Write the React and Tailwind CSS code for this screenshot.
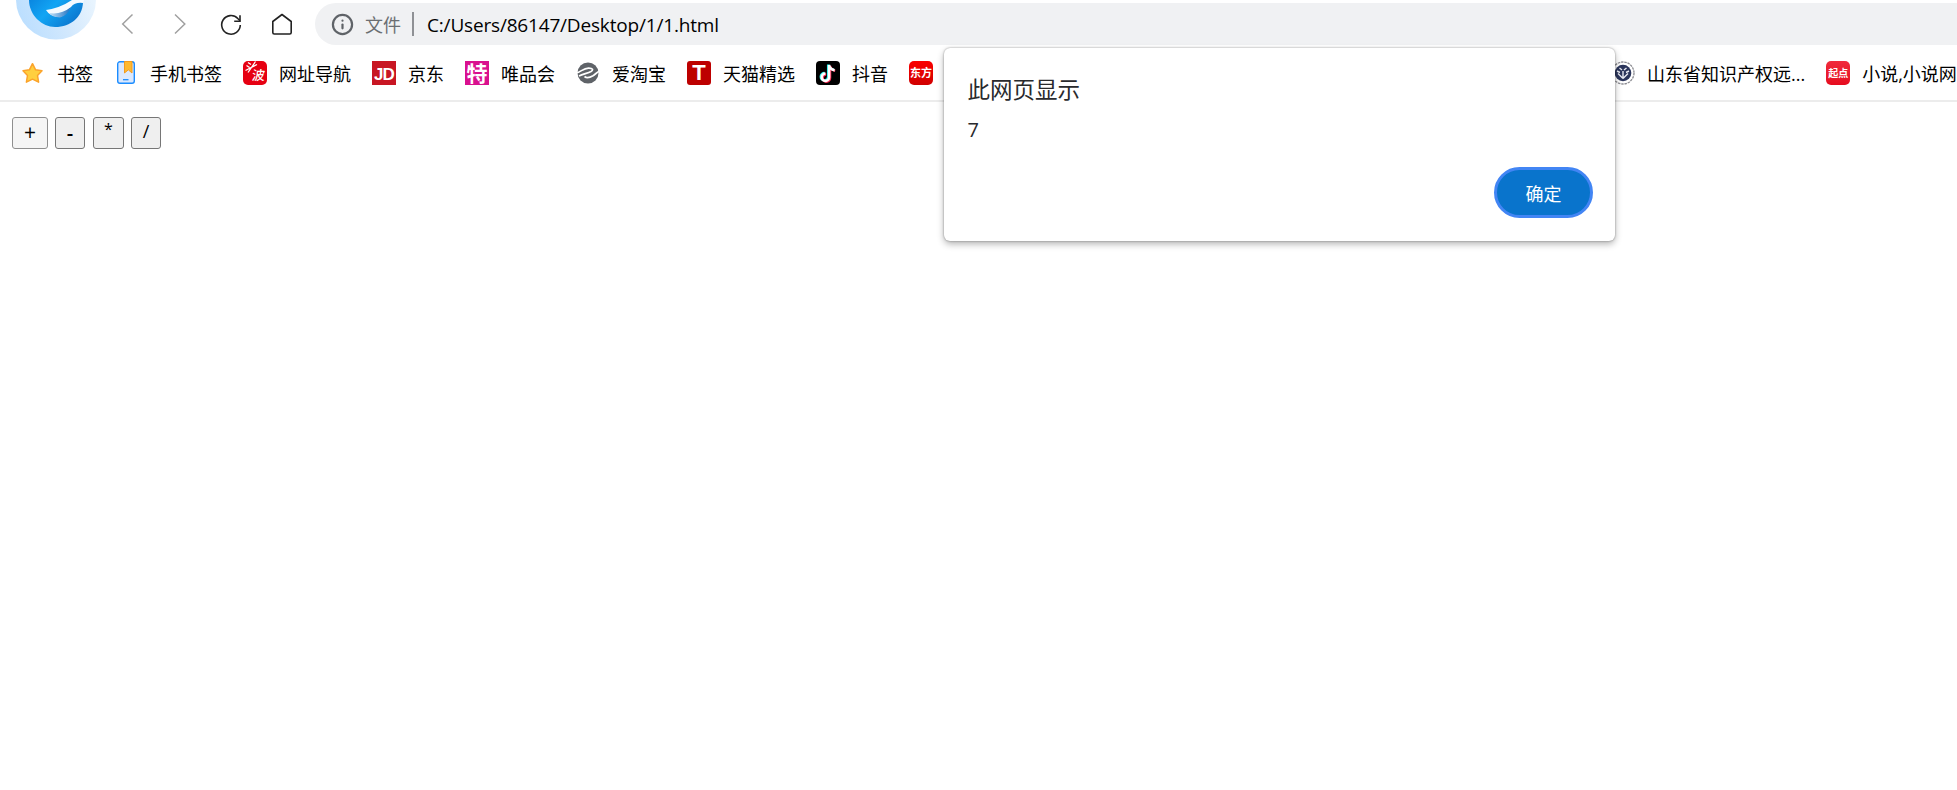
import { Info } from "lucide-react";

const operators = [
  { label: "+", className: "w-9 mr-[7px] border-[#8f8f8f] bg-[#f5f5f5] pb-0.5 text-[21px]" },
  { label: "-", className: "w-[30px] mr-2 border-[#767676] bg-[#efefef] text-xl font-semibold" },
  { label: "*", className: "w-[31px] mr-[7px] border-[#767676] bg-[#efefef] pb-2 text-base" },
  { label: "/", className: "w-[30px] border-[#767676] bg-[#efefef] pb-1 text-lg" },
];

function BrowserLogo() {
  return (
    <svg className="block" width="80" height="40" viewBox="0 0 80 40">
      <defs>
        <linearGradient id="halo" x1="0" y1="1" x2="1" y2="0.6">
          <stop offset="0" stopColor="#b5dcff" />
          <stop offset="0.6" stopColor="#d2e8fd" />
          <stop offset="1" stopColor="#e8f4fe" />
        </linearGradient>
        <linearGradient id="swoosh" x1="0" y1="0" x2="1" y2="0.5">
          <stop offset="0" stopColor="#0a86e0" />
          <stop offset="0.45" stopColor="#12a5f4" />
          <stop offset="1" stopColor="#0b78d0" />
        </linearGradient>
        <linearGradient id="inner" x1="0" y1="0" x2="1" y2="0">
          <stop offset="0" stopColor="#c5e2f7" />
          <stop offset="1" stopColor="#1c6fc0" />
        </linearGradient>
      </defs>
      <circle cx="40" cy="-0.5" r="40" fill="url(#halo)" />
      <path d="M13 0C13 15 26 27 39 27C55 27 66 17 67 3V0Z" fill="url(#swoosh)" />
      <path d="M30 10Q44 8 56 0H68L67 3Q59 2 55 7Q50 15 44 17Q34 17 30 10Z" fill="#f4faff" />
      <path d="M33 13Q45 15 55 7Q51 16 44 17.500Q36 17 33 13Z" fill="url(#inner)" />
    </svg>
  );
}

function Toolbar() {
  return (
    <div className="flex h-[47px] items-start pl-4">
      <div className="w-20">
        <BrowserLogo />
      </div>
      <div className="flex h-12 items-center pl-[19px]">
        <svg className="mr-7" width="24" height="24" viewBox="0 0 24 24" fill="none" stroke="#a0a0a0" strokeWidth="1.5">
          <path d="M17.500 2.500L7.700 12L17.500 21.500" />
        </svg>
        <svg className="mr-7" width="24" height="24" viewBox="0 0 24 24" fill="none" stroke="#a0a0a0" strokeWidth="1.5">
          <path d="M8 2.500L17.800 12L8 21.500" />
        </svg>
        <svg className="mr-[27px]" width="24" height="24" viewBox="0 0 24 24" fill="none" stroke="#222" strokeWidth="1.6">
          <path d="M21.300 13A9.300 9.300 0 1 1 18.800 6.500L21 8.700" />
          <path d="M21 3.300V9.200H15.200" />
        </svg>
        <svg className="mr-[21px]" width="24" height="24" viewBox="0 0 24 24" fill="none" stroke="#222" strokeWidth="1.6" strokeLinejoin="round">
          <path d="M2.800 9.500L12 2.500L21.200 9.500V20.500Q21.200 22 19.700 22H4.300Q2.800 22 2.800 20.500Z" />
        </svg>
      </div>
      <div className="mt-[3px] flex h-[42px] flex-1 items-center rounded-l-full bg-[#f0f1f3] pl-4">
        <Info className="text-[#5f6368]" size={23} strokeWidth={2.3} />
        <span className="mt-0.5 ml-[11px] text-lg text-[#6b6e72]">文件</span>
        <span className="ml-[11px] h-6 w-0.5 bg-[#8f9195]" />
        <span className="mt-0.5 ml-[13px] text-[19px] tracking-[-0.18px] text-black">C:/Users/86147/Desktop/1/1.html</span>
      </div>
    </div>
  );
}

function StarIcon() {
  return (
    <svg width="24" height="24" viewBox="0 0 24 24" fill="#ffcf3f" stroke="#fba32b" strokeWidth="1.5" strokeLinejoin="round">
      <path d="M11.500 2.700L14.600 8.800L21 9.800L16.500 14.500L17.600 21.200L11.500 18.200L5.400 21.200L6.500 14.500L2 9.800L8.400 8.800Z" />
    </svg>
  );
}

function PhoneIcon() {
  return (
    <svg width="24" height="24" viewBox="0 0 24 24">
      <rect x="3.700" y="0.700" width="16.600" height="21.600" rx="2.300" fill="#dbe8fd" stroke="#1a8cff" strokeWidth="1.400" />
      <path d="M10.500 0.500H18V12L14.300 8.800L10.500 12Z" fill="#ffb92e" stroke="#f39a1d" />
      <path d="M9 18.700H14.500" stroke="#1a8cff" strokeWidth="1.300" />
    </svg>
  );
}

function NavIcon() {
  return (
    <span className="flex size-6 items-end justify-end rounded-[5px] bg-[#e60012] pr-0.5 pb-0.5 text-white">
      <svg className="-mr-[7px] mb-2.5 shrink-0" width="14" height="12" viewBox="0 0 14 12" fill="none" stroke="#fff" strokeWidth="1.300">
        <path d="M3 1.500L6 3.500M1.500 4.500L4.500 6.500M0.500 9.500L12 3.500M10.500 0.500L3 11.500" />
      </svg>
      <span className="-skew-x-6 text-[13px] leading-[15px] font-medium">波</span>
    </span>
  );
}

function TaobaoIcon() {
  return (
    <svg width="24" height="24" viewBox="0 0 24 24">
      <circle cx="12" cy="12" r="10.500" fill="#5f6368" />
      <path d="M0 12C5 11 7 7.300 12.500 7.100C17 7 17.500 9 15 10.500C12 12.200 7 13 3 15" fill="none" stroke="#fff" strokeWidth="1.700" />
      <path d="M8.500 15.500C11 17.500 14 16.500 17 14.800C19.500 13.200 21 11 24 9.800" fill="none" stroke="#fff" strokeWidth="1.700" />
    </svg>
  );
}

function DouyinIcon() {
  return (
    <svg width="24" height="24" viewBox="0 0 24 24" fill="none" strokeWidth="2.500">
      <rect width="24" height="24" rx="4" fill="#000" />
      <path d="M12.200 3.500V15.700A3.700 3.700 0 1 1 8.500 12M12.200 3.500Q13 8 18 8.800" stroke="#25f4ee" />
      <path d="M14 5V17A3.700 3.700 0 1 1 10.200 13.300M14 5Q15 9 19.200 9.700" stroke="#fe2c55" />
      <path d="M13.100 4V16.300A3.700 3.700 0 1 1 9.400 12.600M13.100 4Q14 8.500 18.600 9.200" stroke="#fff" />
    </svg>
  );
}

function EmblemIcon() {
  return (
    <svg width="24" height="24" viewBox="0 0 24 24" fill="none">
      <circle cx="12" cy="12" r="11" stroke="#8c8c92" strokeWidth="1.300" strokeDasharray="2.500 0.800" />
      <circle cx="12" cy="12" r="8.300" fill="#2b355b" />
      <path d="M12 17.500L7 12.500M12 17.500V10M12 17.500L17 12.500M6 10L9 11.500M18 10L15 11.500M8.500 7L11 9M15.500 7L13 9" stroke="#e8eaf2" strokeWidth="1.400" />
    </svg>
  );
}

function TextIcon({ className, children }) {
  return (
    <span className={`flex size-6 items-center justify-center whitespace-nowrap text-white ${className}`}>
      {children}
    </span>
  );
}

function Bookmark({ icon, label }) {
  return (
    <div className="mr-[21px] flex h-6 shrink-0 items-center gap-3">
      {icon}
      {label && <span className="mt-0.5 text-lg leading-6 whitespace-nowrap">{label}</span>}
    </div>
  );
}

function BookmarksBar() {
  return (
    <div className="flex h-[55px] items-start overflow-hidden border-b-2 border-[#ececec] pt-3.5 pl-[21px]">
      <Bookmark icon={<StarIcon />} label="书签" />
      <Bookmark icon={<PhoneIcon />} label="手机书签" />
      <Bookmark icon={<NavIcon />} label="网址导航" />
      <Bookmark icon={<TextIcon className="bg-[#c81623] pt-0.5 font-['Liberation_Sans'] text-[17px] leading-none font-bold tracking-tighter">JD</TextIcon>} label="京东" />
      <Bookmark icon={<TextIcon className="bg-[#d9108f] text-[21px] leading-6 font-bold">特</TextIcon>} label="唯品会" />
      <Bookmark icon={<TaobaoIcon />} label="爱淘宝" />
      <Bookmark icon={<TextIcon className="rounded-[3px] bg-[#bd0000] font-['Liberation_Sans'] text-[22px] leading-6 font-bold">T</TextIcon>} label="天猫精选" />
      <Bookmark icon={<DouyinIcon />} label="抖音" />
      <Bookmark icon={<TextIcon className="rounded-[5px] bg-linear-to-b from-[#fb0000] to-[#d00000] text-[11px] font-bold">东方</TextIcon>} />
      <div className="w-[657px] shrink-0" />
      <Bookmark icon={<EmblemIcon />} label="山东省知识产权远..." />
      <Bookmark icon={<TextIcon className="rounded-[5px] bg-linear-to-b from-[#f02a3c] to-[#e60a1e] text-[10px] font-bold">起点</TextIcon>} label="小说,小说网" />
    </div>
  );
}

function AlertDialog() {
  return (
    <div className="absolute top-12 left-[943.5px] flex h-[193px] w-[671.5px] flex-col rounded-md bg-white px-6 text-[#292a2d] shadow-[0_0_2px_rgba(0,0,0,0.4),0_3px_7px_rgba(0,0,0,0.3)]">
      <h1 className="mt-[26px] text-[22.5px] leading-8">此网页显示</h1>
      <p className="mt-2 text-xl leading-8">7</p>
      <button className="mt-[21px] -mr-0.5 flex h-[51px] w-[99px] items-center justify-center self-end rounded-full border-[3px] border-[#4285f4] bg-[#0974cc] pt-0.5 text-lg text-white">
        确定
      </button>
    </div>
  );
}

export default function App() {
  return (
    <div className="relative h-[790px] w-full overflow-hidden bg-white font-['Open_Sans','Noto_Sans_CJK_SC',sans-serif] text-black">
      <Toolbar />
      <BookmarksBar />
      <main className="flex px-3 pt-[15px]">
        {operators.map((op) => (
          <button
            key={op.label}
            className={`flex h-8 items-center justify-center rounded-[3px] border leading-none ${op.className}`}
          >
            {op.label}
          </button>
        ))}
      </main>
      <AlertDialog />
    </div>
  );
}
